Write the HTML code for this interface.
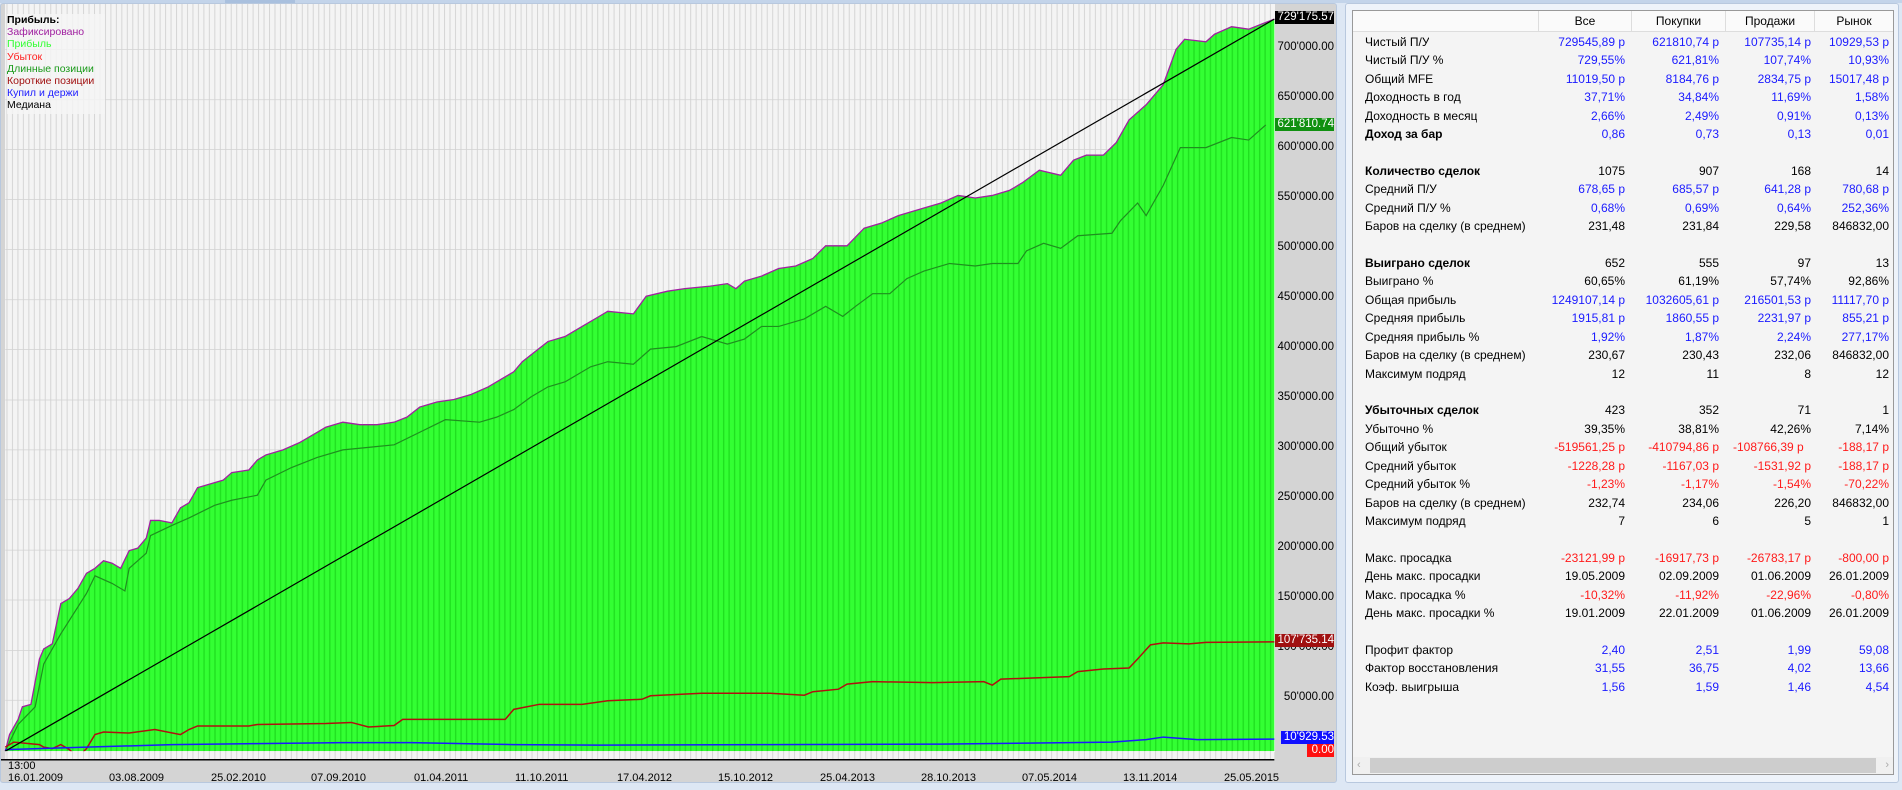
<!DOCTYPE html>
<html><head><meta charset="utf-8">
<style>
*{margin:0;padding:0;box-sizing:border-box}
body{width:1902px;height:790px;overflow:hidden;background:#dde7f4;font-family:"Liberation Sans","DejaVu Sans",sans-serif;position:relative}
#chart{position:absolute;left:0;top:3px;width:1337px;height:780px;background:#d4d4d4;border:1px solid #b8c8de;border-radius:3px;overflow:hidden}
#plot{position:absolute;left:4px;top:0;width:1270px;height:748px;background:#f4f4f4}
.ax{position:absolute;font-size:11px;color:#000;white-space:nowrap}
.pl{position:absolute;left:1274px;width:59px;text-align:right;font-size:11.5px;line-height:13px}
.badge{position:absolute;left:1274px;width:59px;text-align:right;font-size:11.5px;line-height:13px;color:#fff}
#leg{position:absolute;left:6px;top:10px;width:98px;height:100px;background:rgba(245,245,245,.85);font-size:10.5px;line-height:12.2px}
#right{position:absolute;left:1345px;top:3px;width:554px;height:780px;background:#eef3fa;border:1px solid #b8c8de;border-radius:3px}
#tbl{position:absolute;left:6px;top:6px;width:542px;height:765px;background:#f4f4f4;border:1px solid #999}
.hd{position:absolute;top:0;height:21px;background:#fafafa;border-bottom:1px solid #ddd;font-size:12px;line-height:20px;text-align:center}
.row{position:absolute;left:0;width:540px;height:18px;font-size:12px;line-height:18px}
.row span{position:absolute;white-space:nowrap;overflow:hidden}
.l{left:12px}
.c1{left:190px;width:82px;text-align:right}
.c2{left:282px;width:84px;text-align:right}
.c3{left:376px;width:82px;text-align:right}
.c4{left:462px;width:74px;text-align:right}
.b{color:#1a1aff}.r{color:#ff1a1a}
.bold .l{font-weight:bold}
</style></head><body>
<div style="position:absolute;left:0;top:0;width:1902px;height:3px;background:#c3d4ea"></div>
<div style="position:absolute;left:225px;top:0;width:70px;height:4px;background:#a9c0de"></div>
<div id="chart">
<div id="plot"></div>
<svg style="position:absolute;left:0;top:0" width="1340" height="790" viewBox="0 0 1568 1568" preserveAspectRatio="none">
<defs>
<pattern id="vg" width="6.4" height="10" patternUnits="userSpaceOnUse"><rect width="6.4" height="10" fill="#f4f4f4"/><rect x="0" width="1.2" height="10" fill="#d6d6d6"/></pattern>
<pattern id="gs" width="6.4" height="10" patternUnits="userSpaceOnUse"><rect width="6.4" height="10" fill="#33ff33"/><rect x="0" width="1.6" height="10" fill="#20e020"/></pattern>
</defs>
<rect x="5" y="0" width="1485" height="1483" fill="url(#vg)"/>
<g stroke="#d2d2d2" stroke-width="1.5" vector-effect="non-scaling-stroke">
<line x1="5" x2="1490" y1="90" y2="90"/><line x1="5" x2="1490" y1="190" y2="190"/><line x1="5" x2="1490" y1="289" y2="289"/><line x1="5" x2="1490" y1="388" y2="388"/><line x1="5" x2="1490" y1="487" y2="487"/><line x1="5" x2="1490" y1="587" y2="587"/><line x1="5" x2="1490" y1="686" y2="686"/><line x1="5" x2="1490" y1="786" y2="786"/><line x1="5" x2="1490" y1="885" y2="885"/><line x1="5" x2="1490" y1="984" y2="984"/><line x1="5" x2="1490" y1="1084" y2="1084"/><line x1="5" x2="1490" y1="1183" y2="1183"/><line x1="5" x2="1490" y1="1283" y2="1283"/><line x1="5" x2="1490" y1="1382" y2="1382"/>
</g>
<polygon fill="url(#gs)" points="5,1483 10,1450 20,1420 25,1395 35,1390 45,1300 50,1280 60,1270 70,1190 80,1180 90,1160 100,1130 110,1120 120,1105 130,1110 140,1120 150,1085 160,1080 170,1060 175,1025 185,1025 200,1030 210,1000 220,990 230,960 250,950 260,945 270,930 290,925 300,905 310,895 330,885 350,870 370,850 380,840 400,830 420,835 440,835 460,830 475,820 490,800 510,790 530,785 550,775 570,760 590,740 600,730 610,710 625,690 640,670 660,660 680,640 700,620 710,610 740,615 755,580 780,570 800,565 830,560 850,555 860,565 870,550 890,540 910,525 930,520 950,505 965,480 990,480 1010,445 1030,435 1050,420 1080,405 1100,395 1120,380 1140,385 1160,380 1180,370 1195,355 1215,330 1240,340 1255,310 1270,300 1290,300 1305,275 1320,230 1340,200 1360,160 1375,90 1385,70 1410,75 1420,60 1440,45 1460,50 1475,40 1490,30 1490,1483"/>
<g fill="none" vector-effect="non-scaling-stroke">
<polyline stroke="#a020a0" stroke-width="1.3" vector-effect="non-scaling-stroke" points="5,1483 10,1450 20,1420 25,1395 35,1390 45,1300 50,1280 60,1270 70,1190 80,1180 90,1160 100,1130 110,1120 120,1105 130,1110 140,1120 150,1085 160,1080 170,1060 175,1025 185,1025 200,1030 210,1000 220,990 230,960 250,950 260,945 270,930 290,925 300,905 310,895 330,885 350,870 370,850 380,840 400,830 420,835 440,835 460,830 475,820 490,800 510,790 530,785 550,775 570,760 590,740 600,730 610,710 625,690 640,670 660,660 680,640 700,620 710,610 740,615 755,580 780,570 800,565 830,560 850,555 860,565 870,550 890,540 910,525 930,520 950,505 965,480 990,480 1010,445 1030,435 1050,420 1080,405 1100,395 1120,380 1140,385 1160,380 1180,370 1195,355 1215,330 1240,340 1255,310 1270,300 1290,300 1305,275 1320,230 1340,200 1360,160 1375,90 1385,70 1410,75 1420,60 1440,45 1460,50 1475,40 1490,30"/>
<polyline stroke="#1f8f1f" stroke-width="1.2" vector-effect="non-scaling-stroke" points="5,1483 20,1430 40,1395 50,1310 70,1250 100,1170 110,1135 130,1150 145,1165 150,1120 170,1090 175,1055 200,1035 220,1020 250,995 270,985 300,975 310,945 340,920 370,900 400,885 430,880 460,875 490,850 520,825 560,830 580,820 600,805 620,780 640,760 660,750 690,720 710,710 740,715 760,685 790,680 820,660 850,675 870,665 890,640 910,640 940,625 965,600 985,620 1000,600 1020,575 1040,575 1060,545 1080,530 1110,515 1140,520 1160,515 1190,515 1200,490 1220,475 1240,485 1260,460 1300,455 1310,430 1330,395 1340,420 1360,360 1380,285 1410,285 1440,265 1460,270 1480,240"/>
<polyline stroke="#b01010" stroke-width="1.5" vector-effect="non-scaling-stroke" points="5,1475 15,1465 45,1470 50,1475 60,1478 70,1470 80,1480 90,1495 100,1478 110,1450 120,1445 150,1447 180,1440 210,1450 220,1440 230,1433 290,1433 300,1430 380,1428 410,1426 430,1435 460,1432 470,1420 590,1420 600,1400 630,1390 680,1390 710,1383 750,1380 760,1373 820,1368 900,1368 940,1372 950,1365 980,1360 990,1350 1020,1345 1090,1347 1150,1345 1160,1352 1170,1340 1250,1335 1260,1325 1290,1320 1320,1318 1330,1300 1345,1272 1360,1268 1390,1270 1410,1267 1490,1266"/>
<polyline stroke="#1a1aff" stroke-width="1.5" vector-effect="non-scaling-stroke" points="5,1480 100,1475 200,1470 300,1468 400,1466 480,1466 600,1470 700,1471 900,1470 1100,1469 1250,1466 1300,1465 1340,1460 1360,1455 1400,1460 1490,1459"/>
<line x1="5" y1="1483" x2="1490" y2="30" stroke="#000" stroke-width="1.2" vector-effect="non-scaling-stroke"/>
</g>
<rect x="5" y="1483" width="1485" height="17" fill="url(#vg)"/>
<line x1="0" y1="1500" x2="1490" y2="1500" stroke="#000" stroke-width="1.5" vector-effect="non-scaling-stroke"/>
</svg>
<div id="leg">
<div style="font-weight:bold">Прибыль:</div>
<div style="color:#a020a0">Зафиксировано</div>
<div style="color:#33ff33">Прибыль</div>
<div style="color:#ff2020">Убыток</div>
<div style="color:#1a9a1a">Длинные позиции</div>
<div style="color:#a01010">Короткие позиции</div>
<div style="color:#2020ff">Купил и держи</div>
<div>Медиана</div>
</div>
<div class="badge" style="top:7px;background:#000">729'175.57</div>
<div class="pl" style="top:37px">700'000.00</div>
<div class="pl" style="top:87px">650'000.00</div>
<div class="badge" style="top:114px;background:#109010">621'810.74</div>
<div class="pl" style="top:137px">600'000.00</div>
<div class="pl" style="top:187px">550'000.00</div>
<div class="pl" style="top:237px">500'000.00</div>
<div class="pl" style="top:287px">450'000.00</div>
<div class="pl" style="top:337px">400'000.00</div>
<div class="pl" style="top:387px">350'000.00</div>
<div class="pl" style="top:437px">300'000.00</div>
<div class="pl" style="top:487px">250'000.00</div>
<div class="pl" style="top:537px">200'000.00</div>
<div class="pl" style="top:587px">150'000.00</div>
<div class="pl" style="top:637px">100'000.00</div>
<div class="badge" style="top:630px;background:#a01010">107'735.14</div>
<div class="pl" style="top:687px">50'000.00</div>
<div class="badge" style="top:727px;background:#1010ff;left:1280px;width:53px">10'929.53</div>
<div class="badge" style="top:740px;background:#ff1010;left:1306px;width:27px">0.00</div>
<div class="ax" style="left:7px;top:756px">13:00</div>
<div class="ax" style="left:7px;top:768px">16.01.2009</div>
<div class="ax" style="left:108px;top:768px">03.08.2009</div>
<div class="ax" style="left:210px;top:768px">25.02.2010</div>
<div class="ax" style="left:310px;top:768px">07.09.2010</div>
<div class="ax" style="left:413px;top:768px">01.04.2011</div>
<div class="ax" style="left:514px;top:768px">11.10.2011</div>
<div class="ax" style="left:616px;top:768px">17.04.2012</div>
<div class="ax" style="left:717px;top:768px">15.10.2012</div>
<div class="ax" style="left:819px;top:768px">25.04.2013</div>
<div class="ax" style="left:920px;top:768px">28.10.2013</div>
<div class="ax" style="left:1021px;top:768px">07.05.2014</div>
<div class="ax" style="left:1122px;top:768px">13.11.2014</div>
<div class="ax" style="left:1223px;top:768px">25.05.2015</div>
</div>
<div id="right">
<div id="tbl">
<div class="hd" style="left:0;width:186px;border-right:1px solid #ddd"></div>
<div class="hd" style="left:186px;width:93px;border-right:1px solid #ddd">Все</div>
<div class="hd" style="left:279px;width:94px;border-right:1px solid #ddd">Покупки</div>
<div class="hd" style="left:373px;width:89px;border-right:1px solid #ddd">Продажи</div>
<div class="hd" style="left:462px;width:78px">Рынок</div>

<div class="row" style="top:22px"><span class="l">Чистый П/У</span><span class="c1 b">729545,89 р</span><span class="c2 b">621810,74 р</span><span class="c3 b">107735,14 р</span><span class="c4 b">10929,53 р</span></div>
<div class="row" style="top:40px"><span class="l">Чистый П/У %</span><span class="c1 b">729,55%</span><span class="c2 b">621,81%</span><span class="c3 b">107,74%</span><span class="c4 b">10,93%</span></div>
<div class="row" style="top:59px"><span class="l">Общий MFE</span><span class="c1 b">11019,50 р</span><span class="c2 b">8184,76 р</span><span class="c3 b">2834,75 р</span><span class="c4 b">15017,48 р</span></div>
<div class="row" style="top:77px"><span class="l">Доходность в год</span><span class="c1 b">37,71%</span><span class="c2 b">34,84%</span><span class="c3 b">11,69%</span><span class="c4 b">1,58%</span></div>
<div class="row" style="top:96px"><span class="l">Доходность в месяц</span><span class="c1 b">2,66%</span><span class="c2 b">2,49%</span><span class="c3 b">0,91%</span><span class="c4 b">0,13%</span></div>
<div class="row bold" style="top:114px"><span class="l">Доход за бар</span><span class="c1 b">0,86</span><span class="c2 b">0,73</span><span class="c3 b">0,13</span><span class="c4 b">0,01</span></div>

<div class="row bold" style="top:151px"><span class="l">Количество сделок</span><span class="c1">1075</span><span class="c2">907</span><span class="c3">168</span><span class="c4">14</span></div>
<div class="row" style="top:169px"><span class="l">Средний П/У</span><span class="c1 b">678,65 р</span><span class="c2 b">685,57 р</span><span class="c3 b">641,28 р</span><span class="c4 b">780,68 р</span></div>
<div class="row" style="top:188px"><span class="l">Средний П/У %</span><span class="c1 b">0,68%</span><span class="c2 b">0,69%</span><span class="c3 b">0,64%</span><span class="c4 b">252,36%</span></div>
<div class="row" style="top:206px"><span class="l">Баров на сделку (в среднем)</span><span class="c1">231,48</span><span class="c2">231,84</span><span class="c3">229,58</span><span class="c4">846832,00</span></div>

<div class="row bold" style="top:243px"><span class="l">Выиграно сделок</span><span class="c1">652</span><span class="c2">555</span><span class="c3">97</span><span class="c4">13</span></div>
<div class="row" style="top:261px"><span class="l">Выиграно %</span><span class="c1">60,65%</span><span class="c2">61,19%</span><span class="c3">57,74%</span><span class="c4">92,86%</span></div>
<div class="row" style="top:280px"><span class="l">Общая прибыль</span><span class="c1 b">1249107,14 р</span><span class="c2 b">1032605,61 р</span><span class="c3 b">216501,53 р</span><span class="c4 b">11117,70 р</span></div>
<div class="row" style="top:298px"><span class="l">Средняя прибыль</span><span class="c1 b">1915,81 р</span><span class="c2 b">1860,55 р</span><span class="c3 b">2231,97 р</span><span class="c4 b">855,21 р</span></div>
<div class="row" style="top:317px"><span class="l">Средняя прибыль %</span><span class="c1 b">1,92%</span><span class="c2 b">1,87%</span><span class="c3 b">2,24%</span><span class="c4 b">277,17%</span></div>
<div class="row" style="top:335px"><span class="l">Баров на сделку (в среднем)</span><span class="c1">230,67</span><span class="c2">230,43</span><span class="c3">232,06</span><span class="c4">846832,00</span></div>
<div class="row" style="top:354px"><span class="l">Максимум подряд</span><span class="c1">12</span><span class="c2">11</span><span class="c3">8</span><span class="c4">12</span></div>

<div class="row bold" style="top:390px"><span class="l">Убыточных сделок</span><span class="c1">423</span><span class="c2">352</span><span class="c3">71</span><span class="c4">1</span></div>
<div class="row" style="top:409px"><span class="l">Убыточно %</span><span class="c1">39,35%</span><span class="c2">38,81%</span><span class="c3">42,26%</span><span class="c4">7,14%</span></div>
<div class="row" style="top:427px"><span class="l">Общий убыток</span><span class="c1 r">-519561,25 р</span><span class="c2 r">-410794,86 р</span><span class="c3 r" style="text-align:left;left:380px;width:78px">-108766,39 р</span><span class="c4 r">-188,17 р</span></div>
<div class="row" style="top:446px"><span class="l">Средний убыток</span><span class="c1 r">-1228,28 р</span><span class="c2 r">-1167,03 р</span><span class="c3 r">-1531,92 р</span><span class="c4 r">-188,17 р</span></div>
<div class="row" style="top:464px"><span class="l">Средний убыток %</span><span class="c1 r">-1,23%</span><span class="c2 r">-1,17%</span><span class="c3 r">-1,54%</span><span class="c4 r">-70,22%</span></div>
<div class="row" style="top:483px"><span class="l">Баров на сделку (в среднем)</span><span class="c1">232,74</span><span class="c2">234,06</span><span class="c3">226,20</span><span class="c4">846832,00</span></div>
<div class="row" style="top:501px"><span class="l">Максимум подряд</span><span class="c1">7</span><span class="c2">6</span><span class="c3">5</span><span class="c4">1</span></div>

<div class="row" style="top:538px"><span class="l">Макс. просадка</span><span class="c1 r">-23121,99 р</span><span class="c2 r">-16917,73 р</span><span class="c3 r">-26783,17 р</span><span class="c4 r">-800,00 р</span></div>
<div class="row" style="top:556px"><span class="l">День макс. просадки</span><span class="c1">19.05.2009</span><span class="c2">02.09.2009</span><span class="c3">01.06.2009</span><span class="c4">26.01.2009</span></div>
<div class="row" style="top:575px"><span class="l">Макс. просадка %</span><span class="c1 r">-10,32%</span><span class="c2 r">-11,92%</span><span class="c3 r">-22,96%</span><span class="c4 r">-0,80%</span></div>
<div class="row" style="top:593px"><span class="l">День макс. просадки %</span><span class="c1">19.01.2009</span><span class="c2">22.01.2009</span><span class="c3">01.06.2009</span><span class="c4">26.01.2009</span></div>

<div class="row" style="top:630px"><span class="l">Профит фактор</span><span class="c1 b">2,40</span><span class="c2 b">2,51</span><span class="c3 b">1,99</span><span class="c4 b">59,08</span></div>
<div class="row" style="top:648px"><span class="l">Фактор восстановления</span><span class="c1 b">31,55</span><span class="c2 b">36,75</span><span class="c3 b">4,02</span><span class="c4 b">13,66</span></div>
<div class="row" style="top:667px"><span class="l">Коэф. выигрыша</span><span class="c1 b">1,56</span><span class="c2 b">1,59</span><span class="c3 b">1,46</span><span class="c4 b">4,54</span></div>

<div style="position:absolute;left:0;top:746px;width:540px;height:17px;background:#f0f0f0">
<div style="position:absolute;left:4px;top:0;font-size:11px;color:#aaa;line-height:17px">&lsaquo;</div>
<div style="position:absolute;left:17px;top:1px;width:506px;height:15px;background:#cdcdcd"></div>
<div style="position:absolute;right:4px;top:0;font-size:11px;color:#aaa;line-height:17px">&rsaquo;</div>
</div>
</div>
</div>
</body></html>
